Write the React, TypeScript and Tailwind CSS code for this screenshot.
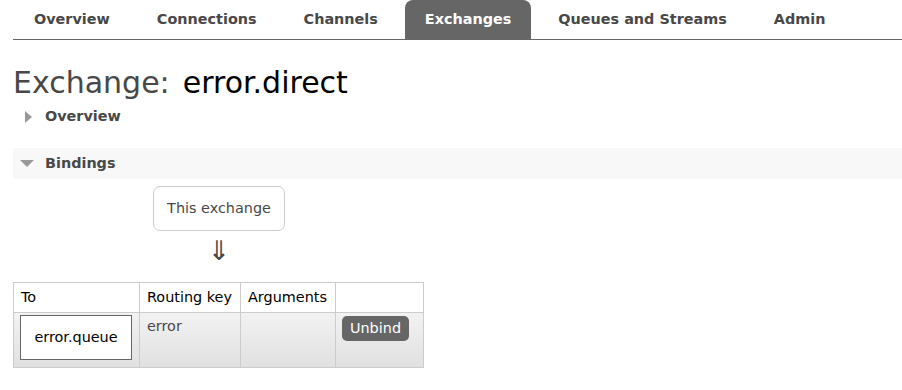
import React from "react";

const tabs = ["Overview", "Connections", "Channels", "Exchanges", "Queues and Streams", "Admin"];

export default function App() {
  return (
    <div
      className="w-[902px] h-[390px] bg-white text-[#484848] overflow-hidden"
      style={{ fontFamily: '"DejaVu Sans", Verdana, sans-serif' }}
    >
      {/* Tab bar */}
      <div className="ml-[13px] h-[40px] border-b border-[#666] flex items-end pl-[1px] gap-[7px]">
        {tabs.map((t) => (
          <div
            key={t}
            className={
              t === "Exchanges"
                ? "h-[39px] px-5 flex items-center rounded-t-[8px] bg-[#666] text-white font-bold text-[14.4px]"
                : "h-[39px] px-5 flex items-center font-bold text-[14.4px] text-[#484848]"
            }
          >
            {t}
          </div>
        ))}
      </div>

      {/* Heading */}
      <div className="ml-[13px] mt-[25px] h-[36px] flex items-center text-[30px] leading-none">
        <span className="text-[#484848]">Exchange:</span>
        <span className="ml-[13px] text-black">error.direct</span>
      </div>

      {/* Overview collapsible */}
      <div className="ml-[25px] mt-[2px] h-[28px] flex items-center">
        <svg width="8" height="12" viewBox="0 0 8 12" className="mr-[12px]">
          <polygon points="0,0 7,6 0,12" fill="#999" />
        </svg>
        <span className="font-bold text-[14.4px] text-[#484848]">Overview</span>
      </div>

      {/* Bindings bar */}
      <div className="ml-[13px] mt-[17px] h-[31px] bg-[#f8f8f8] flex items-center pl-[7px]">
        <svg width="14" height="7" viewBox="0 0 14 7" className="mr-[11px]">
          <polygon points="0,0 14,0 7,7" fill="#999" />
        </svg>
        <span className="font-bold text-[14.4px] text-[#484848]">Bindings</span>
      </div>

      {/* This exchange */}
      <div className="ml-[153px] mt-[7px] w-[132px] h-[45px] border border-[#ccc] rounded-[7px] flex items-center justify-center text-[14.4px] text-[#484848]">
        This exchange
      </div>
      <div className="ml-[153px] w-[132px] h-[51px] flex justify-center pt-[6px] text-[27px] text-[#484848] leading-none">
        ⇓
      </div>

      {/* Table */}
      <table className="ml-[13px] border-collapse text-[14.4px]">
        <thead>
          <tr className="h-[30px] bg-white">
            <th className="w-[126px] border border-[#ccc] px-[7px] text-left font-normal text-black">To</th>
            <th className="w-[101px] border border-[#ccc] px-[7px] text-left font-normal text-black">Routing key</th>
            <th className="w-[95px] border border-[#ccc] px-[7px] text-left font-normal text-black">Arguments</th>
            <th className="w-[88px] border border-[#ccc]"></th>
          </tr>
        </thead>
        <tbody>
          <tr className="h-[55px] bg-gradient-to-b from-[#f2f2f2] to-[#e0e0e0]">
            <td className="border border-[#ccc] pl-[6px] pr-[7px] pt-[2px] pb-[7px] align-top">
              <div className="w-[112px] h-[45px] bg-white border border-[#666] flex items-center justify-center text-black">
                error.queue
              </div>
            </td>
            <td className="border border-[#ccc] px-[7px] pt-[3px] align-top text-[#484848]">error</td>
            <td className="border border-[#ccc]"></td>
            <td className="border border-[#ccc] pl-[6px] pt-[3px] align-top">
              <div className="w-[67px] h-[25px] rounded-[5px] bg-[#666] text-white flex items-center justify-center">
                Unbind
              </div>
            </td>
          </tr>
        </tbody>
      </table>
    </div>
  );
}
